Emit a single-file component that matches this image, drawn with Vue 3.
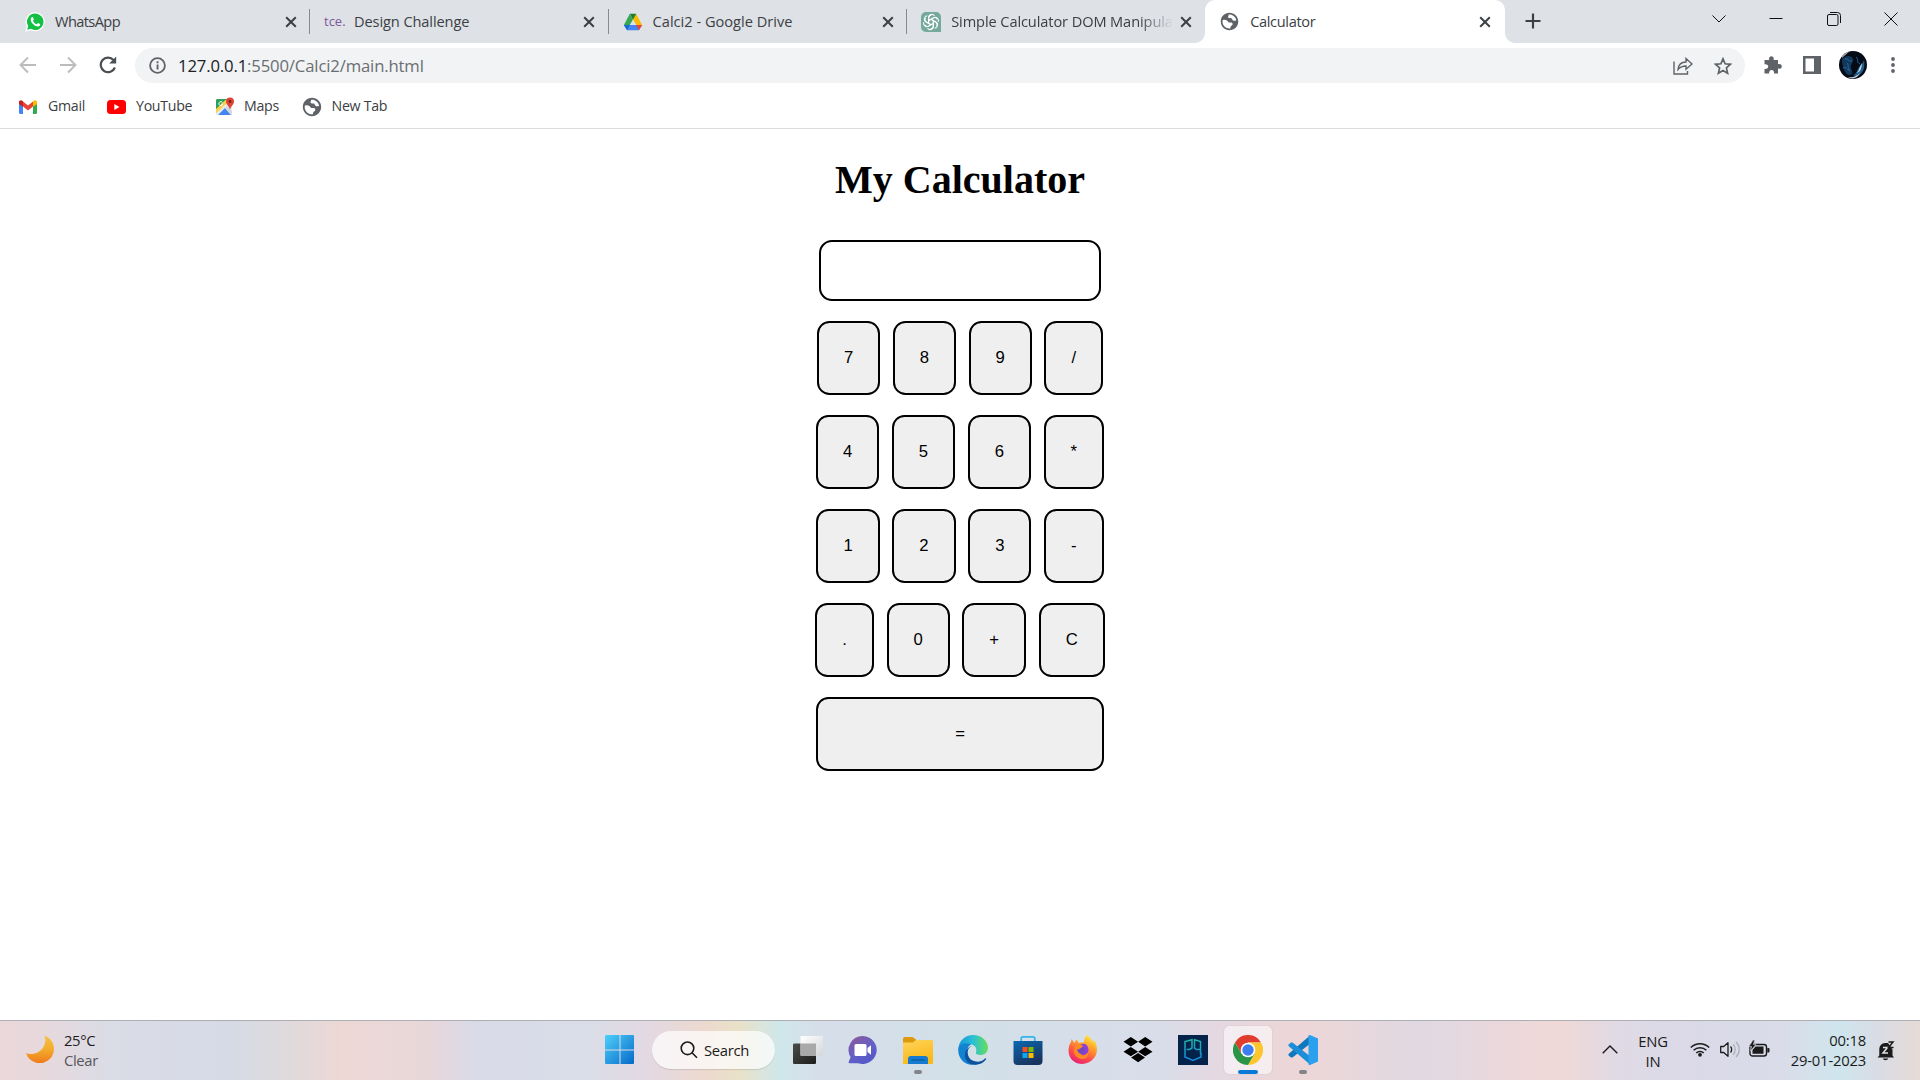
<script setup>
const tabs = [
  { id: 'whatsapp', title: 'WhatsApp', ls: '-0.6px' },
  { id: 'tce', title: 'Design Challenge', ls: '-0.1px' },
  { id: 'drive', title: 'Calci2 - Google Drive', ls: '0px' },
  { id: 'gpt', title: 'Simple Calculator DOM Manipula', ls: '-0.1px' },
  { id: 'calc', title: 'Calculator', ls: '-0.35px' },
]
const bookmarks = [
  { id: 'gmail', title: 'Gmail' },
  { id: 'youtube', title: 'YouTube' },
  { id: 'maps', title: 'Maps' },
  { id: 'newtab', title: 'New Tab' },
]
const rows = [
  ['7', '8', '9', '/'],
  ['4', '5', '6', '*'],
  ['1', '2', '3', '-'],
  ['.', '0', '+', 'C'],
]
const globe =
  'M12 2C6.48 2 2 6.48 2 12s4.48 10 10 10 10-4.48 10-10S17.52 2 12 2zm1 17.9c-.3.1-.7.1-1 .1-4.4 0-8-3.600-8-8 0-.5.05-1 .14-1.500C6 9.800 8 10 9.500 11.200L11 13h3c1.300.2 1.900 1.300 1.500 2.500-.4 1.300-1.500 1.300-2 2-.4.6-.3 1.600-.5 2.400zM19.800 10.500c-1.300 1.100-3.300 1-4.300-.2-.7-.8-.5-1.800-1.500-2.100-1.300-.4-2.500.3-3.300-.5-.9-.9.2-2 .5-3.700 4.100-.4 7.700 2.500 8.600 6.500z'
const petals = [0, 60, 120, 180, 240, 300]
</script>

<template>
  <div class="screen">
    <header class="strip">
      <div v-for="t in tabs" :key="t.id" class="tab" :class="'tab-' + t.id">
        <svg v-if="t.id === 'whatsapp'" class="fav" width="20" height="20" viewBox="0 0 20 20">
          <path d="M10.200.300a9.500 9.500 0 1 1-4.500 17.900L.300 19.700l1.500-5.200A9.500 9.500 0 0 1 10.200.300z" fill="#fff" />
          <path d="M10.200 1.600a8.200 8.200 0 1 1-4.200 15.200L2.200 17.800l1-3.700A8.200 8.200 0 0 1 10.200 1.600z" fill="#12c143" />
          <path d="M6.700 5.300c.5-.5 1.100-.4 1.300.1l.8 1.800c.1.500-.7 1.200-.8 1.500.8 1.700 2 2.800 3.700 3.500.5-.3 1-1.300 1.400-1.200l1.900.9c.6.5-.2 2-1.100 2.400-1.300.6-3.800-.1-6-2.300C5.700 9.800 4.900 7.200 6.700 5.300z" fill="#fff" />
        </svg>
        <span v-else-if="t.id === 'tce'" class="fav tce">tce.</span>
        <svg v-else-if="t.id === 'drive'" class="fav" width="20" height="20" viewBox="0 0 20 20">
          <path d="M6.700 2 10 7.700 4.500 17 .9 13z" fill="#34a853" />
          <path d="M13.300 2 19 13h-5.800L8.700 5z" fill="#fbbc04" />
          <path d="M6.700 1.800h6.600L10 7.500z" fill="#188038" />
          <path d="M.9 13h18.200l-3.200 5.200H4.100z" fill="#4285f4" />
          <path d="M.9 13h5.800l-2.600 5.200z" fill="#1967d2" />
          <path d="M13.300 13h5.800l-3.200 5.200z" fill="#ea4335" />
          <path d="M10 7.700 13 13H7z" fill="#dee1e6" />
        </svg>
        <svg v-else-if="t.id === 'gpt'" class="fav" width="20" height="20" viewBox="0 0 20 20">
          <path d="M5 0h10a5 5 0 0 1 5 5v15H5a5 5 0 0 1-5-5V5a5 5 0 0 1 5-5z" fill="#75a99c" />
          <g fill="none" stroke="#fff" stroke-width="1.050" stroke-linejoin="round">
            <path v-for="a in petals" :key="a" :transform="`rotate(${a} 10 10)`" d="M7.700 11.200V5.700c0-3.500 4.200-4.300 5.800-2M7.700 8.500l4.600-2.600c1.600-.8 3.200-.2 4.100 1.200" />
          </g>
        </svg>
        <svg v-else class="fav globe" width="21" height="21" viewBox="0 0 24 24"><path :d="globe" fill="#5f6368" /></svg>
        <span class="title" :style="{ letterSpacing: t.ls }">{{ t.title }}</span>
        <svg class="close" width="12" height="12" viewBox="0 0 12 12"><path d="M1.200 1.200l9.600 9.600M10.800 1.200l-9.600 9.600" stroke="#3c4043" stroke-width="2" /></svg>
      </div>
      <svg class="plus" width="16" height="16" viewBox="0 0 16 16"><path d="M8 .500v15M.500 8h15" stroke="#3c4043" stroke-width="2.200" /></svg>
      <div class="wincontrols">
        <svg width="14" height="14" viewBox="0 0 14 14"><path d="M.5 3.500 7 10l6.500-6.500" /></svg>
        <svg width="14" height="14" viewBox="0 0 14 14"><path d="M.5 6.500h13" /></svg>
        <svg width="14" height="14" viewBox="0 0 14 14"><rect x=".5" y="2.500" width="10.500" height="11" rx="1.500" /><path d="M3 .5h7.500a3 3 0 0 1 3 3V11" /></svg>
        <svg width="14" height="14" viewBox="0 0 14 14"><path d="M.5.500l13 13M13.500.500l-13 13" /></svg>
      </div>
    </header>

    <div class="toolbar">
      <svg class="nav" width="18" height="18" viewBox="0 0 18 18"><path d="M17 9H2M9 1.500 1.500 9 9 16.500" stroke="#babcbe" /></svg>
      <svg class="nav" width="18" height="18" viewBox="0 0 18 18"><path d="M1 9h15M9 1.500 16.500 9 9 16.500" stroke="#babcbe" /></svg>
      <svg class="nav" width="18" height="18" viewBox="0 0 18 18"><path d="M15.900 11.500A7.300 7.300 0 1 1 14.500 4" stroke="#4b4f53" stroke-width="2.200" /><path d="M17.200.500v7h-7z" fill="#4b4f53" /></svg>
      <div class="omnibox">
        <svg width="17" height="17" viewBox="0 0 17 17"><circle cx="8.500" cy="8.500" r="7.400" fill="none" stroke="#5f6368" stroke-width="1.800" /><path d="M7.600 7.500h1.900v5H7.600zM7.600 4.300h1.900v1.900H7.600z" fill="#5f6368" /></svg>
        <span class="url"><b>127.0.0.1</b>:5500/Calci2/main.html</span>
        <svg class="share" width="20" height="18" viewBox="0 0 20 18" fill="none" stroke="#5f6368" stroke-width="1.400"><path d="M1 4.500V17h13.500v-3" /><path d="M5 12.500C5.500 7.500 8.500 5 13 5V1.500l6 5.500-6 5.300V9c-3.500 0-5.800 1-8 3.500z" /></svg>
        <svg width="18" height="18" viewBox="0 0 18 18"><path d="m9 1.800 2.100 5 5.400.5-4.100 3.600 1.200 5.300L9 13.400l-4.600 2.800 1.200-5.300L1.500 7.300l5.400-.5z" fill="none" stroke="#5f6368" stroke-width="1.700" /></svg>
      </div>
      <svg class="ext" width="18" height="18" viewBox="0 0 18 18"><path d="M1 4h4.200C4.600 1.800 5.800.300 7.400.300S10.200 1.800 9.600 4H14v4.200c2-.5 3.800.4 3.800 2.200 0 1.700-1.800 2.700-3.800 2.200V17.500H10c.4-2-.6-3.600-2.300-3.600-1.800 0-2.900 1.500-2.500 3.600H.500V13c2.400.3 3.700-.8 3.700-2.400C4.200 9 2.800 8 .500 8.400V4z" fill="#5f6368" /></svg>
      <svg class="panel" width="18" height="18" viewBox="0 0 18 18"><path d="M0 0h18v18H0zM2.500 2.500v13H11v-13z" fill="#5f6368" fill-rule="evenodd" /></svg>
      <svg class="avatar" width="28" height="28" viewBox="0 0 28 28">
        <defs><clipPath id="av"><circle cx="14" cy="14" r="14" /></clipPath></defs>
        <g clip-path="url(#av)">
          <rect width="28" height="28" fill="#050b16" />
          <path d="M3 8C8 3 13 5 14 8s-3 5-2 9 3 6-1 7S3 17 3 8z" fill="#12395c" />
          <path d="M2 0h9L3 7z" fill="#c3c4c8" opacity=".8" />
          <path d="M14 24c4-1 4-5 6-8s4-3 5-7c1 7 0 12-5 15-2 1.500-4 1-6 0z" fill="#225f8d" />
          <path d="M17 22c3-1 3-5 6-10-.5 5-1 9-6 10zM9 26c5 1 9-1 12-4-2 5-8 7-12 4z" fill="#c2d8e5" />
          <path d="M4 17c4-2 4 3 7 2M6 8c4-1 3 3 7 2M17 6c3 2 0 5 4 7M8 12c2 1 0 5 3 8" stroke="#236a9f" fill="none" />
        </g>
      </svg>
      <svg class="menu" width="4" height="16" viewBox="0 0 4 16" fill="#5f6368"><circle cx="2" cy="2" r="1.900" /><circle cx="2" cy="8" r="1.900" /><circle cx="2" cy="14" r="1.900" /></svg>
    </div>

    <nav class="bookmarks">
      <div v-for="b in bookmarks" :key="b.id" class="bm" :class="'bm-' + b.id">
        <svg v-if="b.id === 'gmail'" width="18" height="14" viewBox="0 0 18 14">
          <path d="M0 2v10.500C0 13.400.500 14 1.300 14H4V6z" fill="#4285f4" /><path d="M18 2v10.500c0 .9-.5 1.500-1.300 1.500H14V6z" fill="#34a853" />
          <path d="M4 1.500 9 5.500l5-4v5L9 10.500 4 6.500z" fill="#ea4335" /><path d="M0 2C0 .200 2 -.500 3.400.800L4 1.300v5.500L0 4z" fill="#c5221f" /><path d="M18 2c0-1.800-2-2.500-3.400-1.200l-.6.5v5.500L18 4z" fill="#fbbc04" />
        </svg>
        <svg v-else-if="b.id === 'youtube'" width="19" height="14" viewBox="0 0 19 14"><rect width="19" height="14" rx="3.500" fill="#f00" /><path d="m7.300 4 5.200 3-5.200 3z" fill="#fff" /></svg>
        <svg v-else-if="b.id === 'maps'" width="18" height="19" viewBox="0 0 18 19">
          <rect y="2" width="16" height="16" rx="1.500" fill="#e9eaec" />
          <path d="M1.500 2H12L0 14.500v-11C0 2.500.500 2 1.500 2z" fill="#2f9e57" />
          <path d="M12 5 0 16.500V12L10 2.500z" fill="#fbd14b" />
          <path d="M2 18l7-7 6 7z" fill="#4285f4" /><path d="m9 11 2-2 5 5v4h-1z" fill="#d5d8dc" />
          <path d="M14 .500a4 4 0 0 1 4 4c0 3-2.800 4-4 8-1.200-4-4-5-4-8a4 4 0 0 1 4-4z" fill="#dc4436" /><circle cx="14" cy="4.500" r="1.400" fill="#7d1d17" />
          <path d="M6.500 5.500A2 2 0 1 0 6.800 7.200H5" stroke="#fff" stroke-width="1" fill="none" />
        </svg>
        <svg v-else width="22" height="22" viewBox="0 0 24 24"><path :d="globe" fill="#5f6368" /></svg>
        <span>{{ b.title }}</span>
      </div>
    </nav>

    <main class="page">
      <h1>My Calculator</h1>
      <input class="display" type="text" />
      <div v-for="(row, i) in rows" :key="i" class="row">
        <button v-for="k in row" :key="k">{{ k }}</button>
      </div>
      <div class="row"><button class="equals">=</button></div>
    </main>

    <footer class="taskbar">
      <div class="weather">
        <svg width="28" height="28" viewBox="0 0 28 28">
          <defs><linearGradient id="moon" x1="0" y1="0" x2="0" y2="1"><stop offset="0" stop-color="#f7c044" /><stop offset=".5" stop-color="#f2ac2c" /><stop offset="1" stop-color="#f07a1c" /></linearGradient></defs>
          <path d="M18.500.500A14.300 14.300 0 1 1 0 18.300c5.500 1.500 12 .5 16-4.300 3.500-4.200 4-9 2.500-13.500z" fill="url(#moon)" />
        </svg>
        <div><p>25°C</p><p class="dim">Clear</p></div>
      </div>

      <div class="apps">
        <svg class="win" width="30" height="30" viewBox="0 0 30 30">
          <defs><linearGradient id="wg" x1="0" y1="0" x2="1" y2="1"><stop offset="0" stop-color="#4fd0fb" /><stop offset="1" stop-color="#0669c9" /></linearGradient></defs>
          <path d="M1 0h13.500v14.500H0V1a1 1 0 0 1 1-1zM15.500 0H28a1 1 0 0 1 1 1v13.500H15.500zM0 15.500h14.500V29H1a1 1 0 0 1-1-1zM15.500 15.500H29V28a1 1 0 0 1-1 1H15.500z" fill="url(#wg)" />
        </svg>
        <div class="search">
          <svg width="18" height="18" viewBox="0 0 18 18"><circle cx="7.500" cy="7.300" r="6.300" /><path d="m12 11.800 5 5" /></svg>
          <span>Search</span>
        </div>
        <div class="app">
          <svg width="30" height="30" viewBox="0 0 30 30">
            <defs><linearGradient id="tv" x2="1" y2="1"><stop offset="0" stop-color="#4b4b49" /><stop offset="1" stop-color="#1d1d1c" /></linearGradient><linearGradient id="tv2" x2="1" y2="1"><stop offset="0" stop-color="#fff" /><stop offset="1" stop-color="#d5d6d9" /></linearGradient></defs>
            <rect x="0" y="8.500" width="23" height="20.500" rx="1.300" fill="url(#tv)" /><rect x="7.500" y="1" width="22.500" height="20" rx="1.300" fill="url(#tv2)" /><path d="M7.500 8.500H23V21H8.500a1 1 0 0 1-1-1z" fill="#a8a9a8" />
          </svg>
        </div>
        <div class="app">
          <svg width="30" height="30" viewBox="0 0 30 30">
            <defs><linearGradient id="ch" x1=".2" y1="0" x2=".8" y2="1"><stop offset="0" stop-color="#8a5a9b" /><stop offset=".5" stop-color="#6460c8" /><stop offset="1" stop-color="#5257c7" /></linearGradient></defs>
            <path d="M15 1a14 14 0 1 1-5 27.200H1.500c-1 0-1.300-.8-.8-1.500l1.900-4.500A14 14 0 0 1 15 1z" fill="url(#ch)" /><rect x="6.500" y="9" width="12" height="12" rx="1.500" fill="#fff" /><path d="m19.500 13 3.500-2.700v9.400L19.500 17z" fill="#fff" />
          </svg>
        </div>
        <div class="app">
          <svg width="30" height="30" viewBox="0 0 30 30">
            <defs><linearGradient id="fo" x2=".4" y2="1"><stop offset="0" stop-color="#ffd55c" /><stop offset="1" stop-color="#f9b818" /></linearGradient></defs>
            <path d="M0 4a2 2 0 0 1 2-2h7.500L13 4.500V9H0z" fill="#dc9a0c" /><path d="M0 7.500h10L13 5h16a1 1 0 0 1 1 1v22a1 1 0 0 1-1 1H0z" fill="url(#fo)" /><path d="M5 29v-5a3 3 0 0 1 3-3h14a3 3 0 0 1 3 3v5z" fill="#147bd0" /><path d="M8.500 25h13" stroke="#075b9f" stroke-width="1.300" />
          </svg>
          <i class="dot"></i>
        </div>
        <div class="app">
          <svg width="30" height="30" viewBox="0 0 30 30">
            <defs><linearGradient id="e1"><stop offset="0" stop-color="#1397dd" /><stop offset=".5" stop-color="#2cc0d4" /><stop offset="1" stop-color="#66df59" /></linearGradient><linearGradient id="e2" x2="0" y2="1"><stop offset="0" stop-color="#1283cc" /><stop offset="1" stop-color="#1181d7" /></linearGradient></defs>
            <path d="M15 0c9 0 15 6.500 15 12.500 0 5-3.500 7.500-7.500 7.500-3.500 0-5-1.300-4.500-3 1-2 .3-6-4-7.500C8 7.500 2 10 .5 13 1 6 7 0 15 0z" fill="url(#e1)" />
            <path d="M.3 13C2 8 9 7 13.500 9.500 9 10 7 20 12 25c3 3 7 4.500 10 3.500C11 33-1 26 .3 13z" fill="url(#e2)" />
            <path d="M13.500 11c-6 3-4.500 12 1 14.500 4 2 9 1.500 12.500-2 .7-.5 1.500.3 1 1C24 30 16 31 11 28 4 23 7 13 13.500 11z" fill="#0d529c" />
          </svg>
        </div>
        <div class="app">
          <svg width="30" height="30" viewBox="0 0 30 30">
            <defs><linearGradient id="st" x2=".5" y2="1"><stop offset="0" stop-color="#0b68b3" /><stop offset="1" stop-color="#19355f" /></linearGradient></defs>
            <path d="M8.200 7V3.500A1.700 1.700 0 0 1 9.900 1.800h10.200a1.700 1.700 0 0 1 1.700 1.700V7" fill="none" stroke="#35b4ec" stroke-width="1.700" /><path d="M.500 6h29v20a4 4 0 0 1-4 4h-21a4 4 0 0 1-4-4z" fill="url(#st)" />
            <path d="M9.500 12h5v5h-5z" fill="#f25022" /><path d="M15.500 12h5v5h-5z" fill="#7fba00" /><path d="M9.500 18h5v5h-5z" fill="#11a5ef" /><path d="M15.500 18h5v5h-5z" fill="#ffb901" />
          </svg>
        </div>
        <div class="app">
          <svg width="30" height="30" viewBox="0 0 30 30">
            <defs><linearGradient id="ff" x1=".8" y1="0" x2=".3" y2="1"><stop offset="0" stop-color="#fff04a" /><stop offset=".35" stop-color="#ffa42b" /><stop offset=".7" stop-color="#ff4f46" /><stop offset="1" stop-color="#e81f78" /></linearGradient></defs>
            <path d="M19 0c4 3 5 5 6 7l1-2c4 6 4 13 0 18C19 32 6 30 2 22-.5 17 .5 10 3 7l.5-3 3 4 2-3.500L11 8c1.500-.7 3-1 5-.5 0-3 1-6 3-7.500z" fill="url(#ff)" /><circle cx="14.500" cy="15" r="5.800" fill="#7449bd" /><path d="M8 10c3-1 5 0 8 1.500-3 0-3 3-7 3 1 5 8 7 11 2.500 2 7-8 10-13 3-2-3-1-7 1-10z" fill="#ff8a22" /><path d="M14 9c4-1 7 3 6.200 7-1 3-4 5-7 4 4-1 5-5 2-8z" fill="#913ddd" />
          </svg>
        </div>
        <div class="app">
          <svg width="30" height="30" viewBox="0 0 30 30" fill="#000"><path d="m7.800 2 7.300 4.700-7.300 4.700L.500 6.700zM22.200 2l7.300 4.700-7.300 4.700-7.100-4.700zM7.800 12l7.300 4.700-7.300 4.600-7.300-4.600zM22.200 12l7.300 4.700-7.300 4.600-7.100-4.600zM15.100 18l6.900 4.500-6.900 4.700-7-4.700z" /></svg>
        </div>
        <div class="app">
          <svg width="30" height="30" viewBox="0 0 30 30">
            <defs><linearGradient id="pg" x2="0" y2="1"><stop offset="0" stop-color="#1fb5a5" /><stop offset="1" stop-color="#1586de" /></linearGradient></defs>
            <path d="M0 0h30v30H0z" fill="#03234b" /><path d="M7 19.500V6.500L14 4.800V13l-2.500 1.500H8.500M22.500 19.500V6.500L16.500 4.800V13l2 1.500h3.500M7 17.500v4.500l8 3.500 8-3.500v-4.500" fill="none" stroke="url(#pg)" stroke-width="1.500" />
          </svg>
        </div>
        <div class="app active">
          <svg width="30" height="30" viewBox="0 0 30 30">
            <path d="M2 7.500A15 15 0 0 1 28 7.500H15l-6.500 11.200z" fill="#e03d2f" /><path d="M28 7.500A15 15 0 0 1 15 30l6.500-11.300L15 7.500z" fill="#fcc72e" /><path d="M15 30A15 15 0 0 1 2 7.500l6.500 11.200h13z" fill="#2b9547" />
            <circle cx="15" cy="15" r="7.300" fill="#fff" /><circle cx="15" cy="15" r="5.700" fill="#3c7df0" />
          </svg>
          <i class="dot"></i>
        </div>
        <div class="app">
          <svg width="30" height="30" viewBox="0 0 30 30">
            <path d="M22 .500 23 8 4.500 22.500 3 22.500.500 20.500V19z" fill="#0f78be" /><path d="M22 29.500 23 22 4.500 7.500 3 7.500.500 9.500V11z" fill="#1a8ed8" /><path d="M22 0l8 3.500v23L22 30c-1 .3-1.500-.2-1.500-1V1c0-.8.500-1.300 1.500-1z" fill="#2aa0ef" />
          </svg>
          <i class="dot"></i>
        </div>
      </div>

      <div class="tray">
        <svg class="up" width="16" height="9" viewBox="0 0 16 9"><path d="M.700 8.200 8 1l7.300 7.200" fill="none" stroke="#1b1b1b" stroke-width="1.400" /></svg>
        <div class="lang"><p>ENG</p><p>IN</p></div>
        <svg class="wifi" width="20" height="15" viewBox="0 0 20 15" fill="none" stroke="#1b1b1b" stroke-width="1.500"><path d="M.800 5.500a13 13 0 0 1 18.400 0M3.600 8.300a9 9 0 0 1 12.800 0M6.300 11a5.200 5.200 0 0 1 7.400 0" /><circle cx="10" cy="12.800" r="1.900" fill="#1b1b1b" stroke="none" /></svg>
        <svg class="vol" width="20" height="17" viewBox="0 0 20 17" fill="none" stroke="#1b1b1b" stroke-width="1.300"><path d="M.7 5.500h3L8 1.700v13.600l-4.300-3.800h-3z" stroke-linejoin="round" /><path d="M10.500 5.500c1.500 1.500 1.500 4.500 0 6" /><path d="M13 3.300c3 2.800 3 7.600 0 10.400M16 1c4.300 4 4.300 11 0 15" stroke="#aeb0bb" /></svg>
        <svg class="bat" width="21" height="17" viewBox="0 0 21 17"><rect x="1" y="4.500" width="16.500" height="11.500" rx="2.500" fill="none" stroke="#1b1b1b" stroke-width="1.400" /><path d="M3.500 13.700V10l3-3.500H14.500v7.200zM18.300 8h1.200a1 1 0 0 1 1 1v2.500a1 1 0 0 1-1 1h-1.200z" fill="#1b1b1b" /><path d="M4 0 0 6.500h2.500L1.500 11 7 4.500H4.300L5.800.200z" fill="#1b1b1b" stroke="#dcdce8" stroke-width=".6" /></svg>
        <div class="clock"><p>00:18</p><p>29-01-2023</p></div>
        <svg class="bell" width="18" height="20" viewBox="0 0 18 20"><path d="M2.300 14.500V7.700A6 6 0 0 1 8 2h3l4.500 6.500v6l1.500 2H.500zM5.800 17.500h5.400c-.5 2.300-4.900 2.300-5.400 0z" fill="#1b1b1b" /><path d="M6 6.500h4.500L6 12h5" stroke="#dfe0e6" stroke-width="1.500" fill="none" /><path d="M11.500 1H16l-4.500 5.500h5" stroke="#1b1b1b" stroke-width="1.500" fill="none" /></svg>
      </div>
    </footer>
  </div>
</template>

<style>
body { margin: 0; background: #fff; }
</style>

<style scoped>
* { box-sizing: border-box; }
p { margin: 0; }
svg { display: block; flex: none; }
.screen { width: 1920px; height: 1080px; display: flex; flex-direction: column; overflow: hidden; background: #fff; font-family: "Open Sans", "Noto Sans", sans-serif; color: #3c4043; }
.strip { height: 43px; flex: none; background: #dee1e6; display: flex; align-items: flex-start; }
.tab { width: 298.600px; height: 43px; display: flex; align-items: center; padding: 0 13.500px 0 14px; position: relative; }
.tab-whatsapp { width: 310px; padding-left: 25px; }
.tab-whatsapp::after, .tab-tce::after, .tab-drive::after { content: ""; position: absolute; right: 0; top: 9px; width: 1px; height: 25px; background: #868b90; }
.tab-gpt { width: 298px; }
.tab-calc { width: 300px; padding: 0 14px; background: #fff; border-radius: 10px 10px 0 0; }
.tab-calc::before, .tab-calc::after { content: ""; position: absolute; bottom: 0; width: 10px; height: 10px; }
.tab-calc::before { left: -10px; background: radial-gradient(circle at 0 0, transparent 9.500px, #fff 10.200px); }
.tab-calc::after { right: -10px; background: radial-gradient(circle at 100% 0, transparent 9.500px, #fff 10.200px); }
.fav { width: 20px; flex: none; }
.fav.globe { width: 21px; }
.tce { font: 500 13px/20px "Open Sans", sans-serif; color: #7d5a98; padding-bottom: 1px; }
.title { flex: 1; min-width: 0; margin: 0 10px; padding-bottom: 2px; font-size: 14.600px; line-height: 20px; white-space: nowrap; }
.tab-gpt .title { margin-right: 7px; -webkit-mask-image: linear-gradient(90deg, #000 calc(100% - 34px), transparent); mask-image: linear-gradient(90deg, #000 calc(100% - 34px), transparent); }
.plus { margin: 13px 0 0 19.500px; }
.wincontrols { margin-left: auto; display: flex; gap: 43.300px; padding: 12px 22px 0 0; }
.wincontrols svg { fill: none; stroke: #111; stroke-width: 1; }

.toolbar { height: 45px; flex: none; display: flex; align-items: center; padding-left: 19px; }
.nav { fill: none; stroke-width: 1.900; margin: 0 22px 2px 0; }
.nav:nth-child(3) { margin-right: 18px; }
.omnibox { width: 1610px; height: 35px; border-radius: 18px; background: #f1f3f4; display: flex; align-items: center; padding: 0 13.500px 0 14px; }
.url { margin-left: 12px; font-size: 16.700px; letter-spacing: -0.150px; color: #6a6e72; white-space: nowrap; }
.url b { font-weight: 400; color: #202124; }
.share { margin: 0 20.500px 0 auto; }
.ext { margin: 0 0 1px 19px; }
.panel { margin: 0 18px 1px 21px; }
.avatar { margin: 0 24px 1px 0; }
.menu { margin-bottom: 1px; }

.bookmarks { height: 41px; flex: none; border-bottom: 1px solid #dadce0; display: flex; align-items: center; padding: 0 0 3px 19px; font-size: 14.200px; letter-spacing: -0.300px; line-height: 20px; }
.bm { display: flex; align-items: center; height: 36px; gap: 10px; }
.bm span { padding-bottom: 1px; }
.bm-gmail { width: 88px; gap: 11px; }
.bm-youtube { width: 109px; }
.bm-maps { width: 84.500px; }
.bm-newtab { gap: 9px; }

.page { flex: 1; display: flex; flex-direction: column; align-items: center; }
h1 { margin: 28px 0 0; font: bold 40px/46px "Liberation Serif", serif; color: #000; }
.display { width: 282px; height: 61px; margin: 37px 0 0; border: 2px solid #000; border-radius: 13px; background: #fff; outline: 0; }
.row { display: flex; gap: 12.600px; margin-top: 20px; }
.row button { height: 74px; padding: 0 25px; border: 2px solid #000; border-radius: 12.500px; background: #efefef; color: #000; font: 16.667px/20px "Liberation Sans", sans-serif; }
.row .equals { width: 288px; }

.taskbar { height: 60px; flex: none; border-top: 1px solid #adadb4; display: flex; color: #1b1b1b;
  background: linear-gradient(90deg, #ead8db 0, #e8d8db 36px, #dadce6 110px, #d6dae7 225px, #dadadf 265px, #edd8d5 345px, #e8d7da 430px, #d9dae8 475px, #d9dee8 580px, #e2d9e3 645px, #edd9cf 705px, #e9e1c8 738px, #cfe7ea 780px, #d6deea 820px, #d2e0e8 960px, #d9ddea 1160px, #e5d8e0 1220px, #edd6d7 1300px, #e0d9e2 1420px, #ead8dc 1500px, #f0d8d6 1560px, #dfdae5 1620px, #dad9e8 1700px, #dadce9 1780px, #cfe5ed 1840px, #dadce4 1880px, #e6dbd6 1920px); }
.weather { width: 605px; display: flex; padding-left: 26px; gap: 10px; font-size: 14.800px; line-height: 20px; letter-spacing: -0.350px; }
.weather svg { margin-top: 14px; }
.weather > div { padding-top: 9px; }
.dim { color: #56565b; }
.apps { display: flex; align-items: center; height: 58px; }
.win { margin-right: 17px; }
.search { width: 123px; height: 38px; border-radius: 19px; background: rgba(255, 255, 255, .7); box-shadow: 0 1px 1px rgba(0, 0, 0, .12); display: flex; align-items: center; padding-left: 28px; gap: 6px; font-size: 14.800px; letter-spacing: -0.300px; margin-right: 8.700px; }
.search svg { fill: none; stroke: #1b1b1b; stroke-width: 1.600; }
.app { width: 48px; height: 48px; margin-right: 7.050px; border-radius: 5px; display: flex; align-items: center; justify-content: center; position: relative; }
.active { background: rgba(255, 255, 255, .55); box-shadow: 0 0 1px rgba(0, 0, 0, .25); }
.dot { position: absolute; bottom: 0; left: 20px; width: 8px; height: 4px; border-radius: 2px; background: #838488; }
.active .dot { width: 20px; left: 14px; background: #0a7ad8; }
.tray { margin-left: auto; display: flex; font-size: 14.800px; line-height: 20px; letter-spacing: -0.200px; padding-right: 25px; }
.up { margin: 24px 20px 0 0; }
.lang { width: 30px; text-align: center; padding-top: 10px; margin-right: 22px; }
.wifi { margin: 21px 9.500px 0 0; }
.vol { margin: 20px 9.500px 0 0; }
.bat { margin: 19px 19px 0 0; }
.clock { width: 77px; text-align: right; padding-top: 9px; margin-right: 11px; }
.bell { margin-top: 20px; }
</style>
